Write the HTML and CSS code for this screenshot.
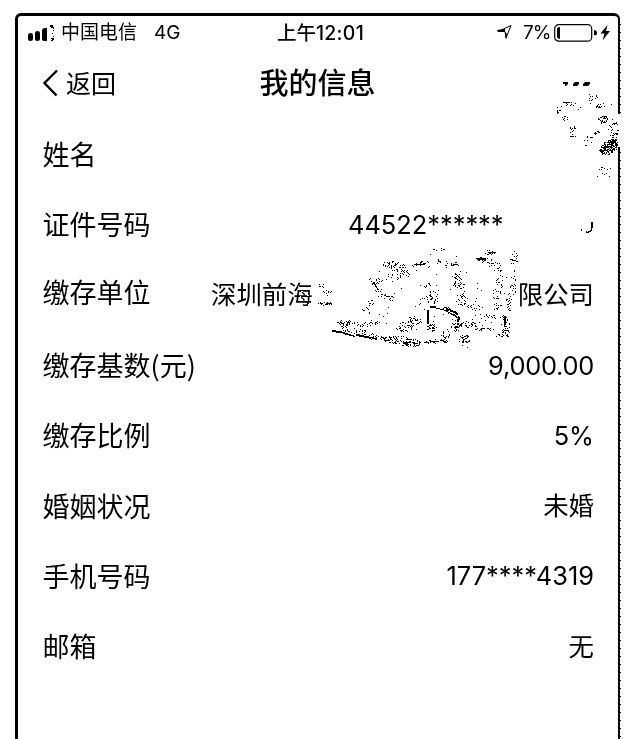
FILE: index.html
```html
<!DOCTYPE html>
<html lang="zh-CN">
<head>
<meta charset="utf-8">
<title>我的信息</title>
<link rel="stylesheet" href="styles.css">
</head>
<body>
<div class="phone">
  <header class="status">
    <div class="carrier">
      <svg class="signal" width="27" height="18" viewBox="0 0 27 18"><path d="M0 11q0-2 2.500-2t2.500 2v4q0 2-2.500 2t-2.500-2zM7 9q0-2 2.500-2t2.500 2v6q0 2-2.500 2t-2.500-2zM14 7q0-3 3-3h2v13h-3q-2 0-2-2z"/><path d="M22 1h3v2h1v2h-1v-1h-2v-1h-1zM25 6h1v1h-1zM24 9h1v1h-1zM25 12h1v1h-1zM23 14h3v2h-1v1h-2v-1h1v-1h-1z"/></svg>
      <span class="name">中国电信</span><span class="net">4G</span>
    </div>
    <div class="time">上午<span>12:01</span></div>
    <div class="power">
      <svg class="locate" width="16" height="17" viewBox="0 0 16 17"><path d="M2 7L14 1.500L9 14L8 7.500Z" fill="none" stroke="#000" stroke-width="1"/><path d="M0 6L8 5V8H1zM8 8l2 2-1 6z"/></svg>
      <span class="percent">7%</span>
      <svg class="battery" width="58" height="20" viewBox="0 0 58 20"><rect x="1.700" y="1.700" width="37" height="16.500" rx="4" fill="none" stroke="#000" stroke-width="1.200"/><path d="M4 6q0-2 3-2v12q-3 0-3-3zM41 7q3 0 3 3t-3 2zM54.500 2l-7 8.500h4l-2 7 7.500-9.500h-4z"/></svg>
    </div>
  </header>
  <nav class="bar">
    <div class="back"><svg width="17" height="28" viewBox="0 0 17 28"><path d="M15 1.500L2.500 14L14.500 26.500" fill="none" stroke="#000" stroke-width="2.400"/></svg><span>返回</span></div>
    <h1>我的信息</h1>
    <svg class="more" width="30" height="8" viewBox="0 0 30 8"><path d="M1 2h5v2l-2 2H3V4H1zM11 4l2-2h4v2l-2 2h-4zM21 4l2-2h5v2l-2 2h-5z"/></svg>
  </nav>
  <main class="rows">
    <div class="row"><span class="label">姓名</span></div>
    <div class="row"><span class="label">证件号码</span><span class="value id"><b>44522</b><i>******</i></span></div>
    <div class="row unit"><span class="label">缴存单位</span><span class="value company"><span>深圳前海</span><span>限公司</span></span></div>
    <div class="row"><span class="label">缴存基数(元)</span><span class="value amount">9,000.00</span></div>
    <div class="row"><span class="label">缴存比例</span><span class="value">5%</span></div>
    <div class="row"><span class="label">婚姻状况</span><span class="value">未婚</span></div>
    <div class="row"><span class="label">手机号码</span><span class="value tel"><b>177</b><i>****</i><b>4319</b></span></div>
    <div class="row"><span class="label">邮箱</span><span class="value">无</span></div>
  </main>
</div>
<svg class="mask" width="638" height="739" viewBox="0 0 638 739" shape-rendering="crispEdges">
  <path d="M616 114h6v33h-6z" fill="#fff"/>
  <path d="M298 286h1v1h-1zM301 291h2v1h-2zM305 287h1v3h-1zM307 295h2v1h-2zM302 299h1v2h-1zM299 303h2v1h-2zM308 304h1v2h-1zM304 283h1v2h-1zM309 289h2v1h-2zM300 296h1v1h-1zM306 300h2v1h-2z" fill="#fff"/>
  <path d="M592 222v6q-1 5-6 4M581 230h1" fill="none" stroke="#000" stroke-width="1.200"/>
  <path d="M332 330l8 1 10 3v1l-10-2-8-1zM356 334l10 2 11 2v1l-10-1-11-2zM343 332l12 4v1l-12-3z"/>
  <path d="M428 324v-14M430 307h6M450 310l8 4M459 317l-1 5" fill="none" stroke="#000" stroke-width="2"/>
  <path d="M436 308l8 2 8 4 6 4" fill="none" stroke="#000" stroke-width="1"/>
  <path d="M477 258h9v2h-9zM488 252h6v1h-6zM404 270l5 3v1zM414 264h11v1h-11zM455 273l5 4v1h-1l-4-4zM504 316h2v9h-2zM374 282l5 8h-1l-5-7zM563 102h7v1h-7zM420 343l24-3v1l-20 2z"/>
</svg>
<script src="mask.js"></script>
</body>
</html>
```
FILE: styles.css
```css
* { box-sizing: border-box; }
html, body { height: 100%; overflow: hidden; }
body {
  margin: 0;
  padding: 13px 18px 0 15px;
  background: #fff;
  color: #000;
  font-family: Inter, "Noto Sans CJK SC", sans-serif;
  filter: grayscale(1) brightness(.75) contrast(12);
}
b, i { font-weight: inherit; font-style: normal; }
.phone {
  height: 750px;
  border: 3px solid #000;
  border-right-width: 2px;
  border-radius: 6px;
}
.status {
  height: 33px;
  padding: 0 8px 0 9px;
  display: grid;
  grid-template-columns: 1fr auto 1fr;
  align-items: center;
  font-size: 19px;
  line-height: 30px;
}
.carrier, .power, .back { display: flex; align-items: center; }
.signal { margin: 1px 6px 0 1px; }
.name { width: 76px; padding-top: 1px; }
.net { margin-left: 17px; font-size: 19px; }
.time { font-size: 19.500px; font-weight: 500; margin-left: 4px; }
.time span { font-size: 19.500px; letter-spacing: .3px; }
.power { justify-content: flex-end; }
.locate { margin-right: 10px; }
.percent { width: 30px; font-size: 19px; letter-spacing: -1px; }
.battery { margin-right: -1px; }
.bar {
  height: 71px;
  padding: 0 26px 3px 24px;
  display: grid;
  grid-template-columns: 1fr auto 1fr;
  align-items: center;
}
.back span { font-size: 25px; margin-left: 7px; padding-bottom: 3px; }
h1 { margin: 2px 0 0 1px; font-size: 29px; font-weight: 500; line-height: 40px; }
.more { justify-self: end; margin-top: 2px; }
.rows { padding: 0 24px 0 24.500px; }
.row { height: 70.300px; display: flex; align-items: center; justify-content: space-between; }
.label { font-size: 27px; line-height: 40px; padding-bottom: 2px; font-family: "Noto Sans CJK SC", sans-serif; }
.value { font-size: 25.400px; line-height: 38px; padding-bottom: 1px; }
.amount { letter-spacing: -.25px; }
.unit .label { padding-bottom: 8px; }
.id { width: 246px; }
.company { width: 383px; display: flex; justify-content: space-between; }
.mask { position: absolute; left: 0; top: 0; }
```
FILE: mask.js
```js
// Speckles that cover the private fields: centre x, y, spread x, y, number of dots, slope.
const clusters = [
  [608,147,9,7,190,-.3],[611,141,5,4,35,-.5],[602,119,5,4,38,0],[613,128,5,9,32,0],
  [592,97,5,4,13,0],[599,106,4,2,12,0],[568,103,5,2,9,.1],[557,110,3,3,9,0],
  [565,118,4,3,10,0],[572,131,4,6,20,0],[597,132,4,2,12,0],[587,140,5,6,10,0],
  [603,171,8,7,12,0],[582,105,30,10,9,0],
  [438,249,6,1,9,0],[490,252,6,3,14,0],[515,254,3,6,10,0],[484,260,9,3,20,.2],
  [395,266,13,5,45,.2],[405,271,7,4,18,.4],[422,263,9,2,16,-.3],[437,261,4,2,8,0],
  [453,264,7,2,18,0],[494,264,7,6,18,.3],[512,261,4,3,10,0],[374,280,7,4,16,0],
  [392,277,10,4,14,-.2],[457,278,5,6,15,.5],[500,277,6,8,15,0],[513,282,3,13,22,0],
  [425,285,7,2,11,0],[379,292,5,6,11,.6],[388,297,5,4,15,.3],[431,296,7,7,30,0],
  [458,285,6,4,20,0],[461,299,6,6,28,0],[497,291,6,9,22,0],[509,302,3,9,25,0],
  [370,303,5,3,10,0],[365,310,6,3,6,0],[450,311,8,3,38,.4],
  [474,307,8,3,15,0],[497,306,5,4,12,0],[344,323,9,3,36,0],[367,323,13,3,26,-.1],
  [357,331,20,3,36,.15],[374,337,12,2,30,.1],[400,340,20,4,105,.1],[410,344,9,3,36,0],
  [405,326,9,5,44,-.2],[414,320,7,4,30,0],[431,327,6,4,30,0],[445,335,4,7,26,0],
  [456,325,5,6,36,0],[467,324,11,3,28,.1],[492,316,14,2,16,0],[485,329,10,2,20,0],
  [505,325,4,10,34,0],[502,335,7,2,14,0],[464,341,6,7,35,0],[435,341,13,2,18,-.1],
  [480,319,13,7,14,0],[440,275,65,25,35,0],[435,310,75,20,30,0],
  [322,285,5,2,7,0],[327,292,4,3,9,0],[324,303,7,2,24,0]
];
let seed = 73;
const rnd = () => (seed = (seed * 16807) % 2147483647) / 2147483647;
let d = "";
for (const [cx, cy, rx, ry, n, slope = 0] of clusters) {
  for (let k = 0; k < n; k++) {
    const a = rnd() * Math.PI * 2, r = Math.sqrt(rnd());
    const dx = Math.cos(a) * r * rx;
    const x = Math.round(cx + dx), y = Math.round(cy + Math.sin(a) * r * ry + dx * slope);
    d += `M${x} ${y}h${rnd() < .25 ? 2 : 1}v1h-1z`;
  }
}
// Fine tick marks along the right edge of the frame.
for (let y = 24; y < 739; y += 8) if (y < 114 || y > 147) d += `M620 ${y}h1v1h-1z`;
const path = document.createElementNS("http://www.w3.org/2000/svg", "path");
path.setAttribute("d", d);
document.querySelector(".mask").appendChild(path);
```
